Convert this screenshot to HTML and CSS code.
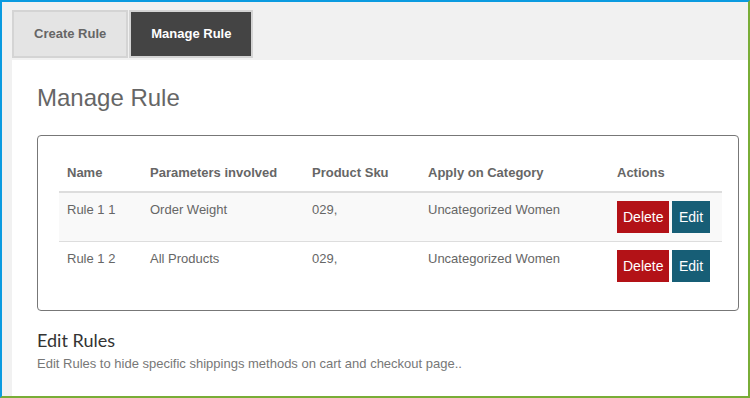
FILE: index.html
```html
<!DOCTYPE html>
<html>
<head>
<meta charset="utf-8">
<link rel="stylesheet" href="styles.css">
</head>
<body>
<div class="frame">
  <div class="tabs">
    <div class="tab">Create Rule</div>
    <div class="tab tab-active">Manage Rule</div>
  </div>
  <div class="content">
    <h2 class="title">Manage Rule</h2>
    <div class="box">
      <table class="rules">
        <colgroup>
          <col class="c1"><col class="c2"><col class="c3"><col class="c4"><col class="c5">
        </colgroup>
        <thead>
          <tr><th>Name</th><th>Parameters involved</th><th>Product Sku</th><th>Apply on Category</th><th>Actions</th></tr>
        </thead>
        <tbody>
          <tr class="odd"><td>Rule 1 1</td><td>Order Weight</td><td>029,</td><td>Uncategorized Women</td><td class="actions"><span class="btn btn-del">Delete</span><span class="btn btn-edit">Edit</span></td></tr>
          <tr><td>Rule 1 2</td><td>All Products</td><td>029,</td><td>Uncategorized Women</td><td class="actions"><span class="btn btn-del">Delete</span><span class="btn btn-edit">Edit</span></td></tr>
        </tbody>
      </table>
    </div>
    <h3 class="sub">Edit Rules</h3>
    <p class="desc">Edit Rules to hide specific shippings methods on cart and checkout page..</p>
  </div>
</div>
</body>
</html>
```
FILE: styles.css
```css
html, body {
  margin: 0;
  padding: 0;
}
body {
  width: 750px;
  height: 398px;
  overflow: hidden;
  font-family: "Liberation Sans", Arial, sans-serif;
}
.frame {
  box-sizing: border-box;
  width: 750px;
  height: 398px;
  background: #f1f1f1;
  border-top: 2px solid #0b9be0;
  border-left: 2px solid #0b9be0;
  border-right: 2px solid #79ad37;
  border-bottom: 2px solid #79ad37;
  padding: 8px 0 0 10px;
  display: flex;
  flex-direction: column;
}
.tabs {
  display: flex;
  gap: 1px;
  height: 48px;
  margin-bottom: 2px;
}
.tab {
  box-sizing: border-box;
  height: 48px;
  padding: 12px 20px;
  border: 2px solid #d4d4d4;
  background: #e4e4e4;
  color: #666;
  font-weight: bold;
  font-size: 13px;
  line-height: 20px;
}
.tab-active {
  background: #444;
  color: #fff;
  border-color: #d4d4d4;
}
.content {
  flex: 1;
  background: #fff;
  padding: 25px 9px 0 25px;
}
.title {
  margin: 0 0 24px;
  font-size: 24px;
  font-weight: normal;
  line-height: 26px;
  color: #666;
}
.box {
  border: 1px solid #777;
  border-radius: 4px;
  padding: 19px 16px 20px 21px;
}
.rules {
  border-collapse: collapse;
  table-layout: fixed;
  width: 663px;
  font-size: 13px;
  color: #666;
}
.c1 { width: 83px; }
.c2 { width: 162px; }
.c3 { width: 116px; }
.c4 { width: 189px; }
.c5 { width: 113px; }
.rules th {
  text-align: left;
  font-weight: bold;
  padding: 8px;
  line-height: 20px;
  border-bottom: 2px solid #ddd;
  vertical-align: bottom;
}
.rules td {
  padding: 7px 8px 9px;
  line-height: 20px;
  vertical-align: top;
  height: 32px;
}
.rules td.actions {
  padding: 8px;
}
.rules tr.odd td {
  background: #f9f9f9;
  border-bottom: 1px solid #ddd;
}
.actions {
  white-space: nowrap;
}
.btn {
  display: inline-block;
  padding: 6px 6px;
  font-size: 14px;
  line-height: 20px;
  color: #fff;
}
.btn-del {
  background: #b31217;
  margin-right: 3px;
}
.btn-edit {
  background: #175e76;
  padding: 6px 6.5px;
}
.sub {
  margin: 19px 0 0;
  font-family: Lato, "Liberation Sans", sans-serif;
  font-weight: normal;
  font-size: 18px;
  line-height: 20px;
  color: #333;
}
.desc {
  margin: 5px 0 0;
  font-size: 13px;
  line-height: 18px;
  color: #777;
}
```
